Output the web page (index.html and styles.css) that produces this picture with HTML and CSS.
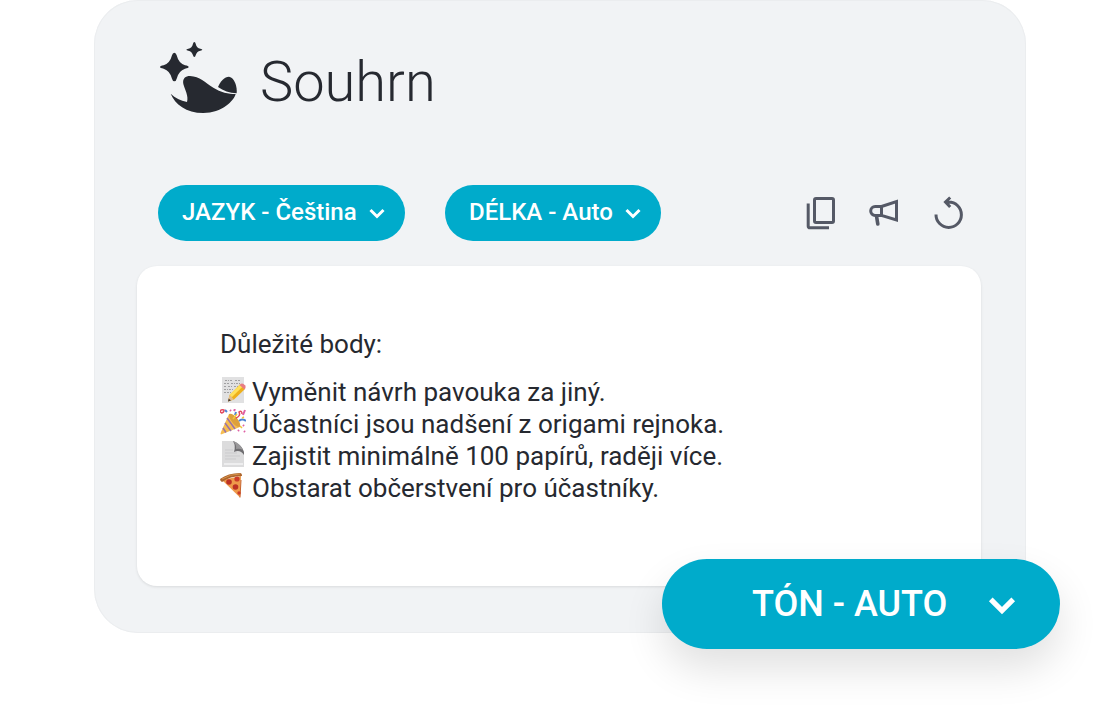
FILE: index.html
```html
<!DOCTYPE html>
<html lang="cs">
<head>
  <meta charset="UTF-8">
  <meta name="viewport" content="width=device-width, initial-scale=1">
  <title>Souhrn</title>
  <link rel="stylesheet" href="styles.css">
</head>
<body>

<main class="summary">
  <header class="summary-header">
    <svg class="logo" viewBox="30 36 234 216" aria-hidden="true">
      <path d="M73 68Q78 68 80 76Q86 100 105 106Q116 108 116 111Q116 114 105 116Q86 122 80 146Q78 154 73 154Q68 154 66 146Q60 122 41 116Q30 114 30 111Q30 108 41 106Q60 100 66 76Q68 68 73 68Z"/>
      <path d="M133 36Q136 36 137 41Q140 54 151 56Q157 57 157 59Q157 61 151 62Q140 64 137 76Q136 81 133 81Q130 81 129 76Q126 64 115 62Q109 61 109 59Q109 57 115 56Q126 54 129 41Q130 36 133 36Z"/>
      <path d="M62 191C76 204 91 212 111 216C117 199 104 178 100 162C97 145 107 138 120 138C150 139 164 157 190 173C212 187 235 192 257 192C252 212 216 249 160 249C108 249 75 222 62 191Z"/>
      <path d="M204 171C211 153 224 140 237 140C254 143 262 170 260 190C238 189 220 182 204 171Z"/>
    </svg>
    <h1>Souhrn</h1>
  </header>

  <div class="toolbar">
    <div class="pill">
      <select id="language" aria-label="Jazyk">
        <option>JAZYK - Čeština</option>
      </select>
      <svg class="chevron" viewBox="0 0 16 11" aria-hidden="true"><path d="M1.500 2L8 8.500L14.500 2"/></svg>
    </div>
    <div class="pill">
      <select id="length" aria-label="Délka">
        <option>DÉLKA - Auto</option>
      </select>
      <svg class="chevron" viewBox="0 0 16 11" aria-hidden="true"><path d="M1.500 2L8 8.500L14.500 2"/></svg>
    </div>

    <div class="actions">
      <button type="button" aria-label="Kopírovat">
        <svg viewBox="0 0 32 36">
          <rect x="9.500" y="3.500" width="19" height="24" rx="1.500"/>
          <path d="M3.200 8.500V31.300a1.500 1.500 0 0 0 1.500 1.500H24"/>
        </svg>
      </button>
      <button type="button" aria-label="Přečíst nahlas">
        <svg viewBox="0 0 32 36">
          <path d="M12.500 11.500L27.500 6.500V25L12.500 20.500ZM12.500 11.500H6.200a4.500 4.500 0 0 0 0 9H12.500"/>
          <path d="M7.500 21L8.800 29" stroke-width="3.600" stroke-linecap="round"/>
        </svg>
      </button>
      <button type="button" aria-label="Obnovit">
        <svg viewBox="0 0 32 36">
          <path d="M3 19.500A12.700 12.700 0 1 0 15.700 7H13M17.200 2.500L12.500 7L17.200 12"/>
        </svg>
      </button>
    </div>
  </div>

  <section class="result">
    <p>Důležité body:</p>
    <ul>
      <li>
        <svg class="emoji" viewBox="0 0 26 26" aria-hidden="true">
          <path d="M2 0H24V26H2Z" fill="#e1e1e2"/>
          <path d="M5 3.500h4m1 0h3m2 0h5M4 6.500h5m2 0h4m1 0h4M4 9.500h3m1 0h4m2 0h4M4 12.500h4m1 0h4M4 15.500h2m1 0h4" stroke="#8f8f92" stroke-width=".8" stroke-dasharray="2 1"/>
          <path d="M8 24.500L9.500 18L20 7.500L25 12L14 22.500Z" fill="#eeb01c"/>
          <path d="M9.500 18L20 7.500L22.500 9.800L11.800 20.200Z" fill="#ffe05a"/>
          <path d="M19.500 8L21 6.800Q23 6 25 8.200Q26.500 10.500 24.500 12.500Z" fill="#e97d83"/>
          <path d="M8 24.500L9.500 18L14 22.500Z" fill="#e5c08e"/>
          <path d="M8 24.500L8.700 21.500L11 23.600Z" fill="#443b36"/>
        </svg>
        Vyměnit návrh pavouka za jiný.
      </li>
      <li>
        <svg class="emoji" viewBox="0 0 26 26" aria-hidden="true">
          <path d="M9 5Q17 8 20 18L1 25.500Q0 25 1 23Z" fill="#f6bd50"/>
          <path d="M7 9L15 20M5 14L11 22M3 19L6 23.500" stroke="#9a72a8" stroke-width="1.500"/>
          <path d="M9 5Q12 3.500 16.500 8.500Q21 14 20 18Q15 18 11.500 12Q8.500 7.500 9 5Z" fill="#dda03c"/>
          <path d="M1 4Q-1 0 4 1Q4 4 1 4M16 9Q21 7 19 3Q22 1 22 5" stroke="#e34b5f" stroke-width="1.500"/>
          <path d="M5 1L7 3M16 3L15 6M19 12Q22 9 26 12" stroke="#4d82d3" stroke-width="2"/>
          <path d="M10 1l1 1M15 0l-1 2M25 1l-2 5M23 16l1 1M24 22l1 1M18 22l1-1" stroke="#df60a4" stroke-width="2"/>
          <path d="M13 10L17 5M22 9l2-1M20 17l2 2" stroke="#f2c63c" stroke-width="1.500"/>
        </svg>
        Účastníci jsou nadšení z origami rejnoka.
      </li>
      <li>
        <svg class="emoji" viewBox="0 0 26 26" aria-hidden="true">
          <path d="M2 0H14L24 11V26H2Z" fill="#dcdcdd"/>
          <path d="M5 9h8M5 12h12M5 15h15M5 18h11" stroke="#cbcbcd"/>
          <path d="M4 23H23" stroke="#eeeeef" stroke-width="2"/>
          <path d="M13 0Q16 5 14 11Q20 8 24 14V11Q22 4 13 0Z" fill="#6f6e71"/>
          <path d="M13 0Q20 2 23 9Q19 7 16 8Q17 4 13 0Z" fill="#99989a"/>
        </svg>
        Zajistit minimálně 100 papírů, raději více.
      </li>
      <li>
        <svg class="emoji" viewBox="0 0 26 26" aria-hidden="true">
          <path d="M2 7L20 24.500L21 3Z" fill="#ee994a"/>
          <path d="M0 6Q8 0 20 0Q22 0 22 3Q10 3 2 9Q0 8 0 6Z" fill="#ac652d"/>
          <path d="M2 6Q10 1 20 1" stroke="#d79249"/>
          <path d="M20 24.500L21 7" stroke="#c6632d"/>
          <circle cx="9" cy="9" r="2.800" fill="#bd3124"/>
          <circle cx="17" cy="6" r="2.600" fill="#cc3c29"/>
          <circle cx="15.500" cy="14" r="2.800" fill="#bd3124"/>
          <circle cx="19" cy="20" r="1.700" fill="#cc3c29"/>
        </svg>
        Obstarat občerstvení pro účastníky.
      </li>
    </ul>
  </section>

  <div class="pill pill-tone">
    <select id="tone" aria-label="Tón">
      <option>TÓN - AUTO</option>
    </select>
    <svg class="chevron" viewBox="0 0 16 11" aria-hidden="true"><path d="M1.500 2L8 8.500L14.500 2"/></svg>
  </div>
</main>

</body>
</html>
```
FILE: styles.css
```css
* {
  box-sizing: border-box;
}
body {
  margin: 0;
  background-color: #ffffff;
  font-family: Roboto, sans-serif;
  color: #262930;
}
.summary {
  position: relative;
  margin: 0 94px 80px;
  padding: 40px 45px 47px 43px;
  background-color: #f1f3f5;
  border-radius: 44px;
  box-shadow: inset 0 0 0 1px #ebedef;
}
.summary-header {
  display: flex;
  align-items: flex-start;
  gap: 22px;
  height: 80px;
  padding-left: 23px;
}
.logo {
  width: 78px;
  height: 72px;
  margin-top: 2px;
  fill: #262930;
}
h1 {
  margin: 0;
  font-size: 56px;
  font-weight: 300;
  line-height: 84px;
}
.toolbar {
  display: flex;
  align-items: center;
  gap: 40px;
  margin: 65px 0 25px;
  padding: 0 16px 0 21px;
}
.pill {
  position: relative;
}
.pill select {
  appearance: none;
  display: block;
  height: 56px;
  padding: 0 48px 2px 24px;
  border: none;
  border-radius: 28px;
  background-color: #00abcb;
  color: #ffffff;
  font-family: inherit;
  font-size: 24px;
  font-weight: 500;
  cursor: pointer;
}
.chevron {
  position: absolute;
  top: 23px;
  right: 20px;
  width: 16px;
  height: 11px;
  fill: none;
  stroke: #ffffff;
  stroke-width: 3;
  pointer-events: none;
}
.actions {
  display: flex;
  gap: 32px;
  margin-left: auto;
}
.actions button {
  padding: 0;
  border: none;
  background: none;
  cursor: pointer;
}
.actions svg {
  display: block;
  width: 32px;
  height: 36px;
  fill: none;
  stroke: #555966;
  stroke-width: 3;
}
.result {
  min-height: 320px;
  padding: 62px 83px;
  background-color: #ffffff;
  border-radius: 20px;
  box-shadow: 0 1px 3px rgba(0, 0, 0, 0.1);
  font-size: 26px;
  line-height: 32px;
}
.result p {
  margin: 0 0 16px;
}
.result ul {
  margin: 0;
  padding: 0;
  list-style: none;
}
.result li {
  display: flex;
  gap: 6px;
}
.emoji {
  flex: none;
  width: 26px;
  height: 26px;
  margin-top: 1px;
  fill: none;
}
.pill-tone {
  position: absolute;
  right: -34px;
  bottom: -16px;
}
.pill-tone select {
  height: 90px;
  padding: 0 112px 0 90px;
  border-radius: 45px;
  font-size: 36px;
  box-shadow: 0 20px 40px rgba(0, 0, 0, 0.12);
}
.pill-tone .chevron {
  top: 37px;
  right: 44px;
  width: 28px;
  height: 19px;
}
```
